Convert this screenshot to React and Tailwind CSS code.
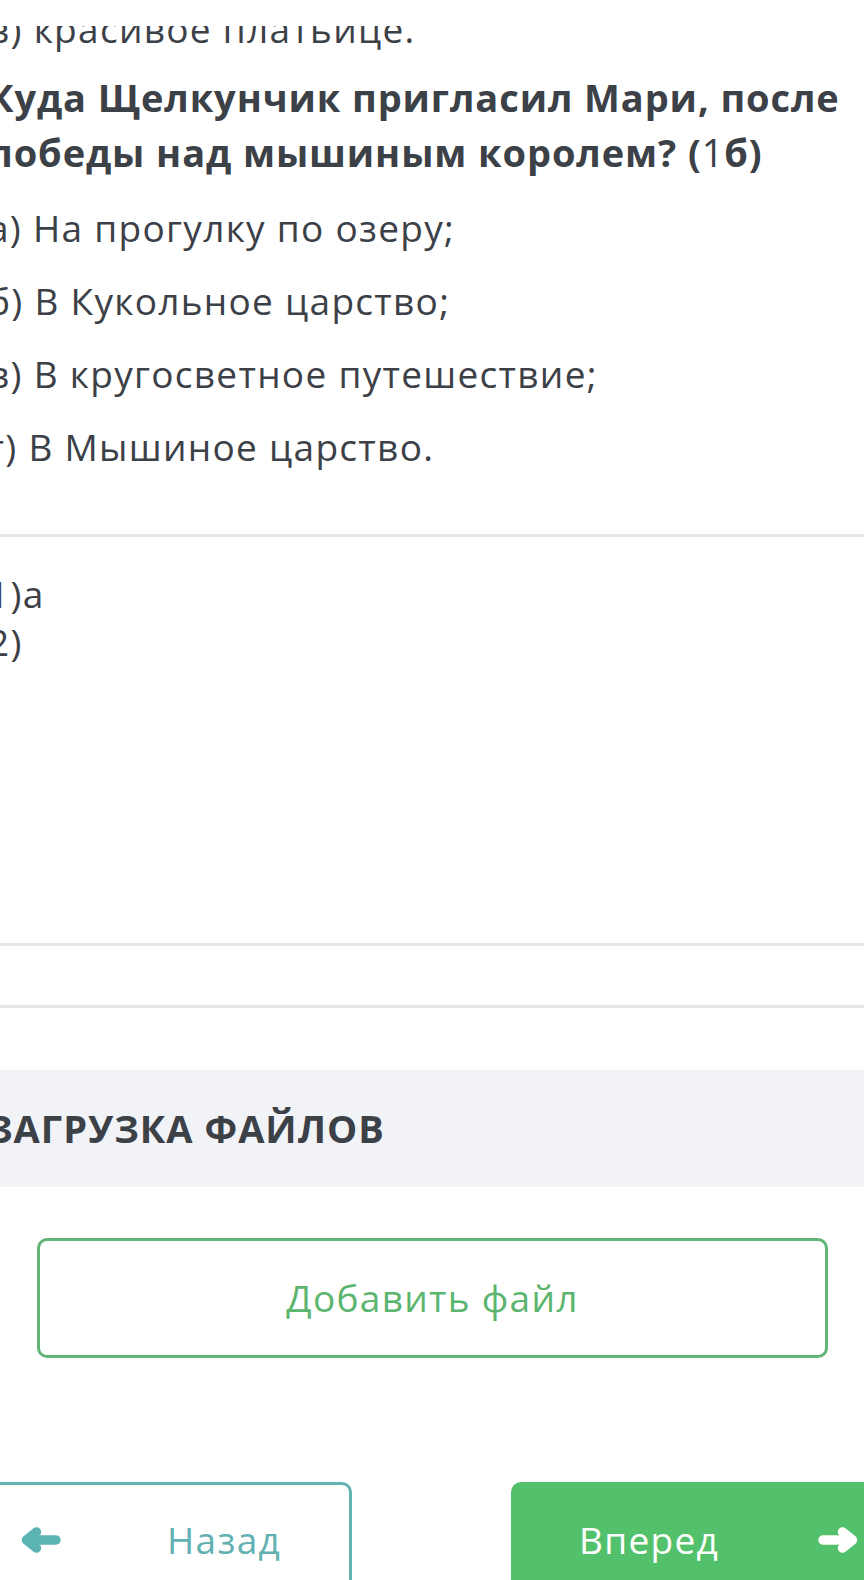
import React from "react";

function ArrowLeft({ className }) {
  return (
    <svg viewBox="0 0 40 26" className={className} fill="none" stroke="currentColor" strokeWidth="9.5" strokeLinecap="round" strokeLinejoin="round">
      <path d="M15.5 5 L5.5 13 L15.5 21" />
      <path d="M7 13 H35" />
    </svg>
  );
}

function ArrowRight({ className }) {
  return (
    <svg viewBox="0 0 40 26" className={className} fill="none" stroke="currentColor" strokeWidth="9.5" strokeLinecap="round" strokeLinejoin="round">
      <path d="M24.5 5 L34.5 13 L24.5 21" />
      <path d="M33 13 H5" />
    </svg>
  );
}

const options = [
  "а) На прогулку по озеру;",
  "б) В Кукольное царство;",
  "в) В кругосветное путешествие;",
  "г) В Мышиное царство.",
];

export default function App() {
  return (
    <div className="relative w-[864px] h-[1580px] overflow-hidden bg-white text-[#3c4047] font-['Open_Sans',sans-serif]">
      {/* white strip of the fixed header that hides the top of the first line */}
      <div className="absolute top-0 left-0 right-0 h-[26px] bg-white" />

      {/* question block, cropped on the left like the phone screenshot */}
      <div className="-ml-[12px] -mt-[7px] whitespace-nowrap">
        <div className="text-[37px] leading-[72px] tracking-[1.3px]">в) красивое платьице.</div>
        <div className="mt-[5px] text-[38px] leading-[55px] font-bold tracking-[0.9px]">
          Куда Щелкунчик пригласил Мари, после
          <br />
          победы над мышиным королем? (<span className="font-normal">1</span>б)
        </div>
        <div className="mt-[11px] text-[37px] leading-[73px] tracking-[1.3px]">
          {options.map((o) => (
            <div key={o}>{o}</div>
          ))}
        </div>
      </div>

      <div className="mt-[51px] h-[3px] bg-[#e5e6e8]" />

      {/* answer */}
      <div className="-ml-[12px] mt-[33px] h-[373px] text-[37px] leading-[48px] tracking-[1.3px] whitespace-nowrap">
        <div>1)а</div>
        <div>2)</div>
      </div>

      <div className="h-[3px] bg-[#e5e6e8]" />
      <div className="mt-[59px] h-[3px] bg-[#e5e6e8]" />

      <div className="mt-[62px] h-[117px] bg-[#f1f3f7] flex items-center">
        <span className="-ml-[12px] text-[38px] font-bold tracking-[1px]">ЗАГРУЗКА ФАЙЛОВ</span>
      </div>

      <div className="mt-[51px] mx-[37px] w-[791px] h-[120px] rounded-[10px] border-[3px] border-[#63b478] flex items-center justify-center">
        <span className="text-[37px] tracking-[1.3px] text-[#5cb56e]">Добавить файл</span>
      </div>

      <div className="mt-[124px] flex -ml-[20px]">
        <div className="w-[372px] h-[116px] shrink-0 rounded-tr-[10px] border-[3px] border-[#63b3b3] flex items-center">
          <ArrowLeft className="ml-[38px] w-[40px] h-[26px] text-[#5bb4b1]" />
          <span className="ml-[106px] text-[37px] tracking-[1.3px] text-[#62b0b2]">Назад</span>
        </div>
        <div className="ml-[159px] w-[380px] h-[116px] shrink-0 rounded-tl-[10px] bg-[#53c16b] flex items-center text-white">
          <span className="ml-[68px] text-[37px] tracking-[1.3px]">Вперед</span>
          <ArrowRight className="ml-[99px] w-[40px] h-[26px]" />
        </div>
      </div>
    </div>
  );
}
